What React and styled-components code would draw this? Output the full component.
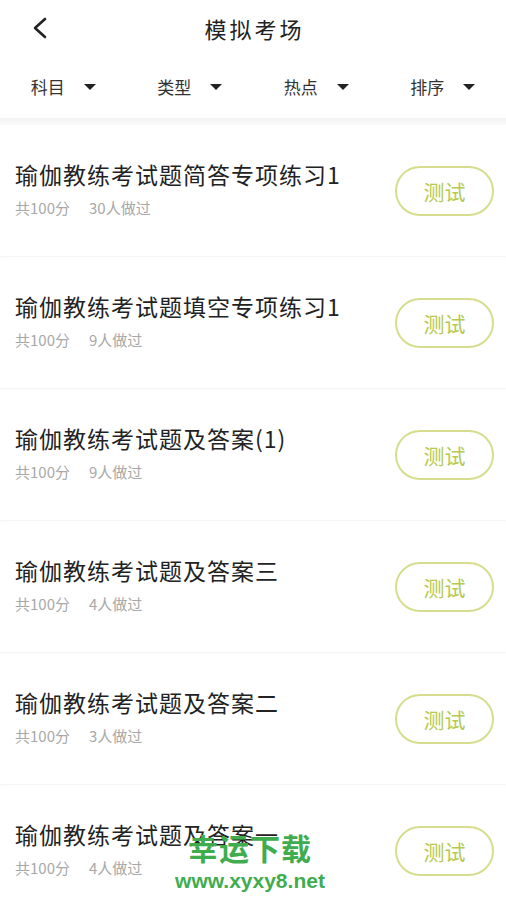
import React from "react";
import styled, { createGlobalStyle } from "styled-components";

const GlobalStyle = createGlobalStyle`
	body {
		margin: 0;
		background: #fff;
		font-family: "Noto Sans CJK SC", "Noto Sans", sans-serif;
	}
`;

const Page = styled.div`
	position: relative;
	width: 506px;
	height: 900px;
	overflow: hidden;
	background: #fff;
`;

const Header = styled.div`
	position: relative;
	height: 56px;
	display: flex;
	align-items: center;
	justify-content: center;
`;

const Back = styled.div`
	position: absolute;
	left: 30px;
	top: 16px;
	width: 20px;
	height: 24px;
	display: flex;
`;

const Title = styled.div`
	font-size: 22px;
	color: #222;
	letter-spacing: 3px;
	margin-left: 3px;
`;

const Filters = styled.div`
	display: grid;
	grid-template-columns: repeat(4, 1fr);
	height: 62px;
	align-items: center;
`;

const Filter = styled.div`
	display: flex;
	align-items: center;
	justify-content: center;
	gap: 19px;
	font-size: 17px;
	color: #333;
	padding-bottom: 2px;
`;

const Caret = styled.span`
	width: 0;
	height: 0;
	border-left: 6px solid transparent;
	border-right: 6px solid transparent;
	border-top: 6px solid #222;
	margin-top: 1px;
`;

const Band = styled.div`
	height: 7px;
	background: linear-gradient(#f3f3f3, #fafafa);
`;

const List = styled.div`
	display: flex;
	flex-direction: column;
`;

const Row = styled.div`
	height: 131px;
	display: flex;
	align-items: center;
	justify-content: space-between;
	padding: 0 12px 0 15px;
	border-bottom: 1px solid #f5f5f5;
	box-shadow: 0 1px 3px #fafafa;
`;

const Info = styled.div`
	display: flex;
	flex-direction: column;
	gap: 12px;
	margin-bottom: 4px;
`;

const Name = styled.div`
	font-size: 23px;
	letter-spacing: 1px;
	color: #222;
	line-height: 26px;
`;

const Meta = styled.div`
	display: flex;
	gap: 19px;
	font-size: 15px;
	color: #a8a8a8;
	line-height: 18px;
`;

const TestButton = styled.div`
	width: 95px;
	height: 46px;
	border: 2px solid #d6de8e;
	border-radius: 25px;
	display: flex;
	align-items: center;
	justify-content: center;
	font-size: 21px;
	color: #b5c94c;
`;

const Watermark = styled.div`
	position: absolute;
	left: 160px;
	width: 180px;
	top: 832px;
	display: flex;
	flex-direction: column;
	align-items: center;
	color: #3fad4e;
	font-family: "Liberation Sans", "Noto Sans CJK SC", sans-serif;
	font-weight: bold;
`;

const WmBig = styled.div`
	font-size: 30px;
	line-height: 36px;
	letter-spacing: 1px;
`;

const WmSmall = styled.div`
	font-size: 21px;
	line-height: 25px;
`;

const items = [
	{ name: "瑜伽教练考试题简答专项练习1", count: 30 },
	{ name: "瑜伽教练考试题填空专项练习1", count: 9 },
	{ name: "瑜伽教练考试题及答案(1)", count: 9 },
	{ name: "瑜伽教练考试题及答案三", count: 4 },
	{ name: "瑜伽教练考试题及答案二", count: 3 },
	{ name: "瑜伽教练考试题及答案一", count: 4 },
];

const App = () => (
	<Page>
		<GlobalStyle />
		<Header>
			<Back>
				<svg width="20" height="24" viewBox="0 0 20 24">
					<path d="M15 3 L5 12 L15 21" fill="none" stroke="#222" strokeWidth="2.6" strokeLinecap="round" strokeLinejoin="round" />
				</svg>
			</Back>
			<Title>模拟考场</Title>
		</Header>
		<Filters>
			{["科目", "类型", "热点", "排序"].map(f => (
				<Filter key={f}>
					{f}
					<Caret />
				</Filter>
			))}
		</Filters>
		<Band />
		<List>
			{items.map((it, i) => (
				<Row key={i}>
					<Info>
						<Name>{it.name}</Name>
						<Meta>
							<span>共100分</span>
							<span>{it.count}人做过</span>
						</Meta>
					</Info>
					<TestButton>测试</TestButton>
				</Row>
			))}
		</List>
		<Watermark>
			<WmBig>幸运下载</WmBig>
			<WmSmall>www.xyxy8.net</WmSmall>
		</Watermark>
	</Page>
);

export default App;
